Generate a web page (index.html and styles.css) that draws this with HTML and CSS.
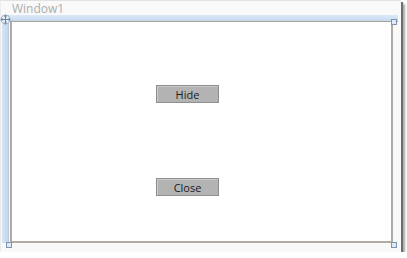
FILE: index.html
```html
<!DOCTYPE html>
<html lang="en">
<head>
    <meta charset="UTF-8">
    <title>Window1</title>
    <link rel="stylesheet" href="styles.css">
</head>
<body>
    <div class="canvas">
        <div class="title">Window1</div>

        <div class="designer">
            <div class="move-handle">
                <svg width="11" height="11" viewBox="0 0 11 11">
                    <circle cx="5.5" cy="5.5" r="4.5" fill="#e3ebf5" stroke="#9fb1c8" stroke-width="1"/>
                    <path d="M5.5 0.5 L3.8 2.4 H7.2 Z M5.5 10.5 L3.8 8.6 H7.2 Z M0.5 5.5 L2.4 3.8 V7.2 Z M10.5 5.5 L8.6 3.8 V7.2 Z" fill="#6f84a0"/>
                    <path d="M5.5 2 V9 M2 5.5 H9" stroke="#6f84a0" stroke-width="1"/>
                </svg>
            </div>
            <div class="bar-left"></div>
            <div class="bar-top"></div>

            <div class="window">
                <div class="buttons">
                    <button class="btn">Hide</button>
                    <button class="btn">Close</button>
                </div>
            </div>

            <span class="grip grip-tr"></span>
            <span class="grip grip-bl"></span>
            <span class="grip grip-br"></span>
        </div>
    </div>
</body>
</html>
```

FILE: styles.css
```css
body {
    margin: 0;
    background: #ffffff;
    font-family: 'Open Sans', 'DejaVu Sans', sans-serif;
}

.canvas {
    width: 400px;
    height: 251px;
    background: #f9f9f9;
    border-top: 1px solid #e2e2e2;
    border-left: 1px solid #ececec;
    box-shadow: 2px 2px 0 #6e6e6e, 4px 4px 2px rgba(0, 0, 0, 0.35);
}

.title {
    height: 14px;
    padding-left: 11px;
    font-size: 12px;
    line-height: 15px;
    color: #acacac;
}

.designer {
    position: relative;
    margin-left: 1px;
    width: 396px;
    display: grid;
    grid-template-columns: 7px 1fr;
    grid-template-rows: 7px 221px;
}

.bar-left {
    grid-column: 1;
    grid-row: 1 / 3;
    background: linear-gradient(90deg, #d7e5f6 0%, #c2d6ee 100%);
    border-right: 1px solid #b7c9e0;
}

.bar-top {
    grid-column: 2;
    grid-row: 1;
    background: linear-gradient(180deg, #dde9f8 0%, #c4d8f0 100%);
    border-bottom: 1px solid #a9a59c;
}

.window {
    grid-column: 2;
    grid-row: 2;
    margin: 0 5px 0 1px;
    background: #ffffff;
    border: 2px solid #b0aca4;
    border-top: none;
}

.buttons {
    display: flex;
    flex-direction: column;
    align-items: flex-start;
    gap: 75px;
    padding: 63px 0 0 144px;
}

.btn {
    width: 63px;
    height: 18px;
    padding: 0;
    background: #b3b3b3;
    border: 1px solid #8e8e8e;
    border-radius: 0;
    box-shadow: inset 1px 1px 0 #cacaca;
    font-family: 'Open Sans', 'DejaVu Sans', sans-serif;
    font-size: 11px;
    line-height: 15px;
    color: #1a1a1a;
}

.move-handle {
    position: absolute;
    left: -2px;
    top: -7px;
    width: 11px;
    height: 11px;
    z-index: 2;
}

.grip {
    position: absolute;
    width: 4px;
    height: 4px;
    background: #dfe8f4;
    border: 1px solid #7d93b2;
}

.grip-tr {
    right: 1px;
    top: 4px;
}

.grip-bl {
    left: 4px;
    bottom: -5px;
}

.grip-br {
    right: 1px;
    bottom: -5px;
}
```
